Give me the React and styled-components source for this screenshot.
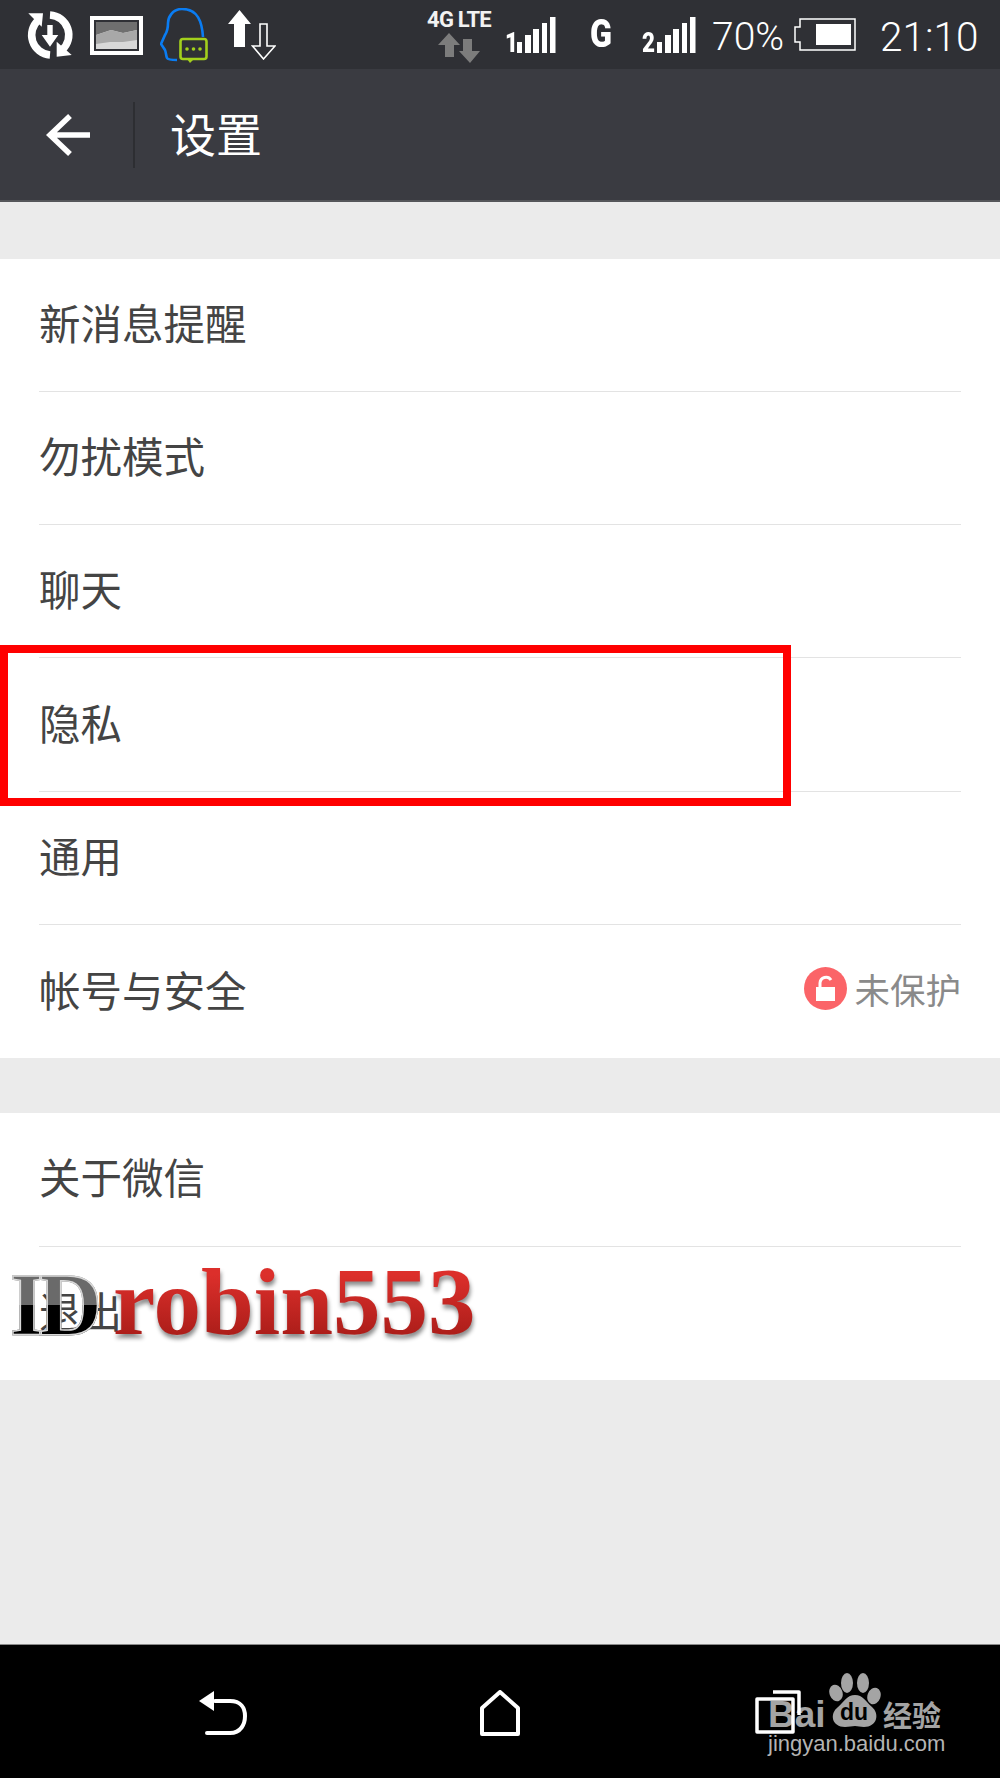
import React from "react";
import styled, { createGlobalStyle } from "styled-components";

const Global = createGlobalStyle`
  html, body { margin: 0; padding: 0; background: #ebebeb; }
  * { box-sizing: border-box; }
`;
const cjk = `"Noto Sans CJK SC", "Noto Sans", sans-serif`;

const Page = styled.div`
  position: relative; width: 1000px; height: 1778px; display: flex; flex-direction: column;
  overflow: hidden; background: #ebebeb; font-family: ${cjk};
`;
const StatusBar = styled.div`
  height: 69px; flex: none; background: #2f3035; display: flex; align-items: flex-start;
  padding: 0 24px 0 26px; color: #fff;
`;
const Slot = styled.div`
  flex: none; width: ${p => p.$w}px; height: ${p => p.$h}px; margin-left: ${p => p.$ml || 0}px;
  margin-top: ${p => p.$mt || 0}px; position: relative;
  svg { display: block; width: 100%; height: 100%; }
`;
const Spacer = styled.div`flex: 1;`;
const Net = styled.div`
  flex: none; width: 66px; margin-top: 8px; display: flex; flex-direction: column; align-items: center;
`;
const NetLabel = styled.div`
  font: 700 22px/24px "Roboto", sans-serif; letter-spacing: -0.8px; color: #f2f2f2; white-space: nowrap;
`;
const StatusText = styled.div`
  flex: none; width: ${p => p.$w}px; margin-left: ${p => p.$ml}px; margin-top: 17px;
  font: 300 ${p => p.$s}px/40px "Roboto", sans-serif; color: #fff; white-space: nowrap;
`;
const NumMark = styled.span`
  position: absolute; left: 0; bottom: -5px; font: 900 28px/30px "Roboto", sans-serif; color: #fff;
  transform: scaleX(.8); transform-origin: left;
`;
const SignalBars = styled.div`
  position: absolute; right: 0; top: 0; width: 39px; height: 36px;
`;
const GMark = styled.div`
  flex: none; margin-left: ${p => p.$ml}px; margin-top: 14px; width: 20px;
  font: 900 38px/40px "Roboto", sans-serif; color: #fff; transform: scaleX(.85); transform-origin: left;
`;
const Header = styled.div`
  height: 133px; flex: none; background: #3a3b41; border-bottom: 2px solid #55565a;
  display: flex; align-items: center; padding-left: 46px;
`;
const HeaderSep = styled.div`width: 2px; height: 66px; background: #2d2e32; margin-left: 43px; margin-right: 35px;`;
const Title = styled.div`font-size: 46px; line-height: 60px; color: #fff; font-weight: 400; padding-bottom: 6px;`;
const Group = styled.div`
  background: #fff; margin-top: ${p => p.$mt}px; padding-left: 39px; padding-right: 39px;
`;
const Row = styled.div`
  height: 133.3px; display: flex; align-items: center; justify-content: space-between; padding-bottom: 6px;
  border-bottom: ${p => (p.$last ? "none" : "1.5px solid #e3e3e3")};
`;
const Label = styled.div`font-size: 41.5px; line-height: 56px; color: #444;`;
const Status = styled.div`display: flex; align-items: center; gap: 7px;`;
const StatusLabel = styled.div`font-size: 35.5px; line-height: 44px; color: #8a8a8a;`;
const Lock = styled.svg`width: 43px; height: 43px; display: block;`;
const Rest = styled.div`flex: 1;`;
const NavBar = styled.div`
  height: 134px; flex: none; background: #000; border-top: 1px solid #8a8a8a; position: relative;
  display: flex; align-items: flex-start; padding: 45px 0 0 199px;
`;
const NavIcon = styled.svg`
  flex: none; position: relative; z-index: 1; width: ${p => p.$w}px; height: 46px;
  margin-left: ${p => p.$ml || 0}px; display: block;
`;
const Highlight = styled.div`
  position: absolute; left: 0; top: 645px; width: 791px; height: 161px; border: 8px solid #f00; pointer-events: none;
`;
const Watermark = styled.div`
  position: absolute; left: 10px; top: 1247px; height: 110px; display: flex; align-items: baseline;
  font-family: "Liberation Serif", serif; font-weight: 700; white-space: nowrap;
`;
const WmId = styled.span`
  font-size: 88px; line-height: 110px; letter-spacing: -6px; width: 103px;
  background: linear-gradient(#6a6a6a 0 50%, #000 50% 100%); -webkit-background-clip: text; background-clip: text;
  color: transparent; -webkit-text-stroke: 1.5px #d8d8d8;
`;
const WmName = styled.span`
  font-size: 95px; line-height: 110px;
  background: linear-gradient(#dc2f2b 25%, #a81c18 85%); -webkit-background-clip: text; background-clip: text;
  color: transparent; filter: drop-shadow(1px 4px 2px rgba(0,0,0,.45));
`;
const Baidu = styled.div`
  position: absolute; left: 768px; top: 28px; width: 180px; height: 90px;
`;
const BaiduTop = styled.div`
  display: flex; align-items: baseline; height: 54px;
`;
const Bai = styled.span`
  font: 700 37px/38px "Liberation Sans", sans-serif; width: 61px; color: #a4a4a4;
`;
const Paw = styled.svg`width: 52px; height: 54px; flex: none; display: block;`;
const Jing = styled.span`
  font: 700 29px/34px ${cjk}; margin-left: 2px; white-space: nowrap; color: #a4a4a4;
`;
const BaiduUrl = styled.div`
  font: 400 22px/24px "Liberation Sans", sans-serif; color: #b4b4b4; margin-top: 5px; white-space: nowrap;
`;

const Bars = () => (
  <svg viewBox="0 0 39 36" fill="#fff">
    <rect x="0" y="25" width="5" height="11" />
    <rect x="8" y="18" width="6" height="18" />
    <rect x="16" y="12" width="6" height="24" />
    <rect x="25" y="6" width="5" height="30" />
    <rect x="33" y="0" width="5.500" height="36" />
  </svg>
);

const items1 = ["新消息提醒", "勿扰模式", "聊天", "隐私", "通用"];

export default function App() {
  return (
    <Page>
      <Global />
      <StatusBar>
        <Slot $w={48} $h={48} $mt={11}>
          <svg viewBox="0 0 48 48" fill="none">
            <path d="M12.500 9A20 20 0 0 0 24 44" stroke="#fff" strokeWidth="7.500" />
            <path d="M24 4A20 20 0 0 1 36 39" stroke="#fff" strokeWidth="7.500" />
            <path d="M2.300 2.300H17L15.700 15.700z" fill="#fff" />
            <path d="M30.700 30.700L45.700 44 30.700 45.700z" fill="#fff" />
            <path d="M21.300 14h5.400v10h5.600L24 35.700 15.700 24h5.600z" fill="#fff" />
          </svg>
        </Slot>
        <Slot $w={53} $h={39} $mt={16} $ml={16}>
          <svg viewBox="0 0 53 39">
            <rect width="53" height="39" fill="#fff" />
            <rect x="4" y="4" width="45" height="31" fill="#2f3035" />
            <rect x="6" y="6" width="41" height="27" fill="#d8d8d8" />
            <path d="M6 6h41v8l-14 3-12-3-15 5z" fill="#6f6f6f" />
            <path d="M6 19l15-5 12 3 14-3v10l-14 2-13 0-14 2z" fill="#a8a8a8" />
          </svg>
        </Slot>
        <Slot $w={50} $h={56} $mt={8} $ml={17}>
          <svg viewBox="0 0 50 56" fill="none">
            <path d="M43 29C42 14 38 1 22 1 12 1 8 10 8 15 8 20 7 24 5 27L1 36 5 42C6 44 6 48 7 50 8 52 12 52 17 52" stroke="#0a7cf2" strokeWidth="2.600" />
            <rect x="20.500" y="31" width="26" height="20" rx="2.500" fill="#2f3035" stroke="#a3d01c" strokeWidth="2.600" />
            <path d="M27 51h7l-4 4z" fill="#a3d01c" />
            <circle cx="27" cy="41" r="1.800" fill="#a3d01c" />
            <circle cx="33.500" cy="41" r="1.800" fill="#a3d01c" />
            <circle cx="40" cy="41" r="1.800" fill="#a3d01c" />
          </svg>
        </Slot>
        <Slot $w={48} $h={50} $mt={10} $ml={18}>
          <svg viewBox="0 0 48 50">
            <path d="M11.500 0L23 14h-6v23H6V14H0z" fill="#fff" />
            <path d="M32 14h7v22h8L35.500 49 24.500 36H32z" fill="none" stroke="#fff" strokeWidth="1.600" />
          </svg>
        </Slot>
        <Spacer />
        <Net>
          <NetLabel>4G LTE</NetLabel>
          <Slot $w={42} $h={31} $mt={1}>
            <svg viewBox="0 0 42 31" fill="#7c7c7c">
              <path d="M11 0l11 12h-6v12H7V12H0z" />
              <path d="M25 6h9v12h8L32 30 21 18h4z" />
            </svg>
          </Slot>
        </Net>
        <Slot $w={51} $h={36} $mt={17} $ml={13}>
          <NumMark>1</NumMark>
          <SignalBars><Bars /></SignalBars>
        </Slot>
        <GMark $ml={34}>G</GMark>
        <Slot $w={54} $h={36} $mt={17} $ml={32}>
          <NumMark>2</NumMark>
          <SignalBars><Bars /></SignalBars>
        </Slot>
        <StatusText $w={71} $ml={16} $s={39}>70%</StatusText>
        <Slot $w={62} $h={33} $mt={18} $ml={11}>
          <svg viewBox="0 0 62 33" fill="none">
            <path d="M6 1h55v31H6v-8H1V9h5z" stroke="#fff" strokeWidth="1.500" />
            <rect x="22" y="6" width="35" height="21" fill="#fff" />
          </svg>
        </Slot>
        <StatusText $w={96} $ml={24} $s={40.5}>21:10</StatusText>
      </StatusBar>
      <Header>
        <Slot $w={44} $h={42}>
          <svg viewBox="0 0 44 42" fill="none" stroke="#fff" strokeWidth="5.500">
            <path d="M44 21H4M24 2L4 21l20 19" />
          </svg>
        </Slot>
        <HeaderSep />
        <Title>设置</Title>
      </Header>
      <Group $mt={56.5}>
        {items1.map(t => (
          <Row key={t}><Label>{t}</Label></Row>
        ))}
        <Row $last>
          <Label>帐号与安全</Label>
          <Status>
            <Lock viewBox="0 0 43 43">
              <circle cx="21.500" cy="21.500" r="21.500" fill="#fb6468" />
              <rect x="12" y="20" width="19" height="14" fill="#fff" />
              <path d="M16 20v-4a6 6 0 0 1 11-3" fill="none" stroke="#fff" strokeWidth="3" />
            </Lock>
            <StatusLabel>未保护</StatusLabel>
          </Status>
        </Row>
      </Group>
      <Group $mt={55}>
        <Row><Label>关于微信</Label></Row>
        <Row $last><Label>退出</Label></Row>
      </Group>
      <Rest />
      <NavBar>
        <NavIcon $w={48} viewBox="0 0 48 46" fill="none" stroke="#fff" strokeWidth="4" strokeLinecap="round">
          <path d="M16 11h15c11 0 15 7 15 15s-4 17-15 17H8" />
          <path d="M0 11L15 1v20z" fill="#fff" stroke="none" />
        </NavIcon>
        <NavIcon $w={40} $ml={233} viewBox="0 0 40 46" fill="none" stroke="#fff" strokeWidth="4" strokeLinejoin="round">
          <path d="M20 2L38 18v26H2V18z" />
        </NavIcon>
        <NavIcon $w={46} $ml={235} viewBox="0 0 46 46" fill="none" stroke="#fff" strokeWidth="3.500" strokeLinejoin="round">
          <path d="M18 2H44V25" />
          <rect x="2" y="9" width="36" height="33" />
        </NavIcon>
        <Baidu>
          <BaiduTop>
            <Bai>Bai</Bai>
            <Paw viewBox="0 0 52 54">
              <g fill="#a4a4a4">
                <ellipse cx="7" cy="20" rx="6.500" ry="8.500" transform="rotate(-20 7 20)" />
                <ellipse cx="18" cy="10" rx="6" ry="10" />
                <ellipse cx="34" cy="10" rx="6" ry="10" />
                <ellipse cx="45" cy="23" rx="6.500" ry="8.500" transform="rotate(20 45 23)" />
                <path d="M26 22c8 0 10 6 17 12 8 7 5 20-8 20-4 0-6-1-9-1s-6 1-10 1C3 54 0 41 9 34c7-6 9-12 17-12z" />
              </g>
              <text x="25" y="47" textAnchor="middle" fontFamily="Liberation Sans, sans-serif" fontSize="23" fontWeight="700" fill="#000">du</text>
            </Paw>
            <Jing>经验</Jing>
          </BaiduTop>
          <BaiduUrl>jingyan.baidu.com</BaiduUrl>
        </Baidu>
      </NavBar>
      <Highlight />
      <Watermark>
        <WmId>ID</WmId>
        <WmName>robin553</WmName>
      </Watermark>
    </Page>
  );
}
